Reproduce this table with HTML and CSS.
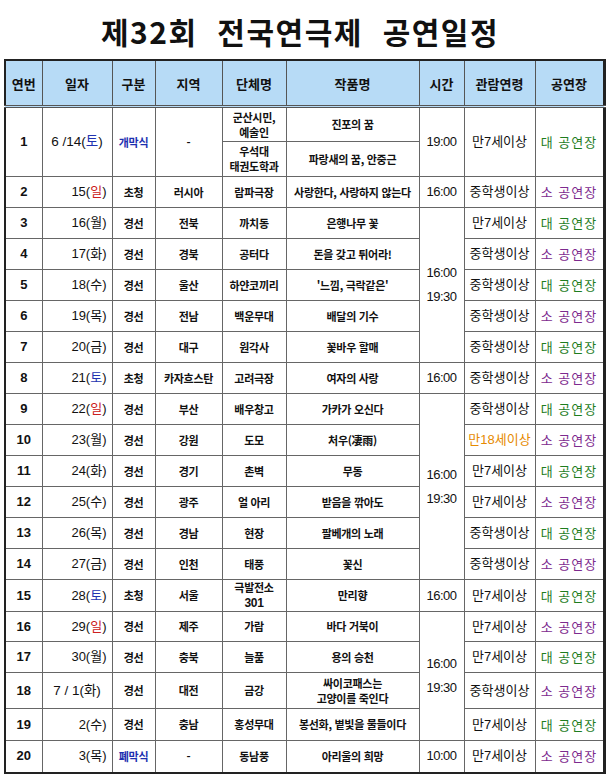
FILE: index.html
```html
<!DOCTYPE html>
<html lang="ko">
<head>
<meta charset="utf-8">
<link rel="stylesheet" href="styles.css">
</head>
<body>
<div class="page">
<h1 class="title">제32회&nbsp; 전국연극제&nbsp; 공연일정</h1>
<table class="sched">
<colgroup>
<col class="c-no"><col class="c-date"><col class="c-type"><col class="c-reg"><col class="c-grp"><col class="c-work"><col class="c-time"><col class="c-age"><col class="c-hall">
</colgroup>
<thead>
<tr><th>연번</th><th>일자</th><th>구분</th><th>지역</th><th>단체명</th><th>작품명</th><th>시간</th><th>관람연령</th><th>공연장</th></tr>
</thead>
<tbody>
<tr class="h35"><td rowspan="2" class="no">1</td><td rowspan="2" class="date spread">6 /14(<span class="sat">토</span>)</td><td rowspan="2" class="k cer">개막식</td><td rowspan="2" class="k">-</td><td class="k">군산시민,<br>예술인</td><td class="k">진포의 꿈</td><td rowspan="2" class="time">19:00</td><td rowspan="2" class="age">만7세이상</td><td rowspan="2" class="hall big">대 공연장</td></tr>
<tr class="h35"><td class="k">우석대<br>태권도학과</td><td class="k">파랑새의 꿈, 안중근</td></tr>
<tr class="h31"><td class="no">2</td><td class="date">15(<span class="sun">일</span>)</td><td class="k">초청</td><td class="k">러시아</td><td class="k">람파극장</td><td class="k">사랑한다, 사랑하지 않는다</td><td class="time">16:00</td><td class="age">중학생이상</td><td class="hall small">소 공연장</td></tr>
<tr class="h31"><td class="no">3</td><td class="date">16(월)</td><td class="k">경선</td><td class="k">전북</td><td class="k">까치동</td><td class="k">은행나무 꽃</td><td rowspan="5" class="time">16:00<br>19:30</td><td class="age">만7세이상</td><td class="hall big">대 공연장</td></tr>
<tr class="h31"><td class="no">4</td><td class="date">17(화)</td><td class="k">경선</td><td class="k">경북</td><td class="k">공터다</td><td class="k">돈을 갖고 튀어라!</td><td class="age">중학생이상</td><td class="hall small">소 공연장</td></tr>
<tr class="h31"><td class="no">5</td><td class="date">18(수)</td><td class="k">경선</td><td class="k">울산</td><td class="k">하얀코끼리</td><td class="k">'느낌, 극락같은'</td><td class="age">중학생이상</td><td class="hall big">대 공연장</td></tr>
<tr class="h31"><td class="no">6</td><td class="date">19(목)</td><td class="k">경선</td><td class="k">전남</td><td class="k">백운무대</td><td class="k">배달의 기수</td><td class="age">중학생이상</td><td class="hall small">소 공연장</td></tr>
<tr class="h31"><td class="no">7</td><td class="date">20(금)</td><td class="k">경선</td><td class="k">대구</td><td class="k">원각사</td><td class="k">꽃바우 할매</td><td class="age">중학생이상</td><td class="hall big">대 공연장</td></tr>
<tr class="h31"><td class="no">8</td><td class="date">21(<span class="sat">토</span>)</td><td class="k">초청</td><td class="k">카자흐스탄</td><td class="k">고려극장</td><td class="k">여자의 사랑</td><td class="time">16:00</td><td class="age">중학생이상</td><td class="hall small">소 공연장</td></tr>
<tr class="h31"><td class="no">9</td><td class="date">22(<span class="sun">일</span>)</td><td class="k">경선</td><td class="k">부산</td><td class="k">배우창고</td><td class="k">가카가 오신다</td><td rowspan="6" class="time">16:00<br>19:30</td><td class="age">중학생이상</td><td class="hall big">대 공연장</td></tr>
<tr class="h31"><td class="no">10</td><td class="date">23(월)</td><td class="k">경선</td><td class="k">강원</td><td class="k">도모</td><td class="k">처우(凄雨)</td><td class="age adult">만18세이상</td><td class="hall small">소 공연장</td></tr>
<tr class="h31"><td class="no">11</td><td class="date">24(화)</td><td class="k">경선</td><td class="k">경기</td><td class="k">촌벽</td><td class="k">무동</td><td class="age">만7세이상</td><td class="hall big">대 공연장</td></tr>
<tr class="h31"><td class="no">12</td><td class="date">25(수)</td><td class="k">경선</td><td class="k">광주</td><td class="k">얼 아리</td><td class="k">받음을 깎아도</td><td class="age">만7세이상</td><td class="hall small">소 공연장</td></tr>
<tr class="h31"><td class="no">13</td><td class="date">26(목)</td><td class="k">경선</td><td class="k">경남</td><td class="k">현장</td><td class="k">팔베개의 노래</td><td class="age">중학생이상</td><td class="hall big">대 공연장</td></tr>
<tr class="h31"><td class="no">14</td><td class="date">27(금)</td><td class="k">경선</td><td class="k">인천</td><td class="k">태풍</td><td class="k">꽃신</td><td class="age">중학생이상</td><td class="hall small">소 공연장</td></tr>
<tr class="h32"><td class="no">15</td><td class="date">28(<span class="sat">토</span>)</td><td class="k">초청</td><td class="k">서울</td><td class="k tight">극발전소<br><span class="num">301</span></td><td class="k">만리향</td><td class="time">16:00</td><td class="age">만7세이상</td><td class="hall big">대 공연장</td></tr>
<tr class="h30"><td class="no">16</td><td class="date">29(<span class="sun">일</span>)</td><td class="k">경선</td><td class="k">제주</td><td class="k">가람</td><td class="k">바다 거북이</td><td rowspan="4" class="time">16:00<br>19:30</td><td class="age">만7세이상</td><td class="hall small">소 공연장</td></tr>
<tr class="h31"><td class="no">17</td><td class="date">30(월)</td><td class="k">경선</td><td class="k">충북</td><td class="k">늘품</td><td class="k">용의 승천</td><td class="age">만7세이상</td><td class="hall big">대 공연장</td></tr>
<tr class="h36"><td class="no">18</td><td class="date spread">7 / 1(화)</td><td class="k">경선</td><td class="k">대전</td><td class="k">금강</td><td class="k">싸이코패스는<br>고양이를 죽인다</td><td class="age">중학생이상</td><td class="hall small">소 공연장</td></tr>
<tr class="h32"><td class="no">19</td><td class="date">2(수)</td><td class="k">경선</td><td class="k">충남</td><td class="k">홍성무대</td><td class="k">봉선화, 볕빛을 물들이다</td><td class="age">만7세이상</td><td class="hall big">대 공연장</td></tr>
<tr class="h32"><td class="no">20</td><td class="date">3(목)</td><td class="k cer">폐막식</td><td class="k">-</td><td class="k">동남풍</td><td class="k">아리울의 희망</td><td class="time">10:00</td><td class="age">만7세이상</td><td class="hall small">소 공연장</td></tr>
</tbody>
</table>
</div>
</body>
</html>
```
FILE: styles.css
```css
html, body {
  margin: 0;
  padding: 0;
  background: #ffffff;
}
.page {
  width: 610px;
  height: 777px;
  padding: 0 0 0 4px;
  box-sizing: border-box;
  font-family: "Liberation Sans", "Noto Sans CJK KR", sans-serif;
  color: #111;
}
.title {
  margin: 0;
  height: 59px;
  line-height: 62px;
  padding-right: 14px;
  text-align: center;
  font-family: "Noto Sans CJK KR", sans-serif;
  font-size: 30px;
  font-weight: 700;
  letter-spacing: 1.5px;
  color: #111;
}
.sched {
  border-collapse: collapse;
  table-layout: fixed;
  width: 599px;
  border: 2px solid #222;
  border-right-width: 3px;
}
.c-no { width: 37px; }
.c-date { width: 70px; }
.c-type { width: 43px; }
.c-reg { width: 67px; }
.c-grp { width: 64px; }
.c-work { width: 133px; }
.c-time { width: 45px; }
.c-age { width: 71px; }
.c-hall { width: 69px; }
.sched th {
  height: 44px;
  background: #b7dbf6;
  border: 1px solid #555;
  border-bottom: 3px double #555;
  font-family: "Noto Sans CJK KR", sans-serif;
  font-size: 13px;
  font-weight: 700;
  padding: 0;
  color: #111;
}
.sched td {
  border: 1px solid #666;
  padding: 0;
  text-align: center;
  vertical-align: middle;
  font-size: 13px;
  line-height: 16px;
  white-space: nowrap;
  overflow: hidden;
}
.h35 { height: 35px; }
.h36 { height: 36px; }
.h32 { height: 32px; }
.h31 { height: 31px; }
.h30 { height: 30px; }
.no { font-size: 13px; font-weight: 700; }
.date {
  text-align: right !important;
  padding-right: 5px !important;
  font-size: 13px;
}
.date.spread {
  text-align: center !important;
  padding-right: 0 !important;
  font-size: 13.5px;
}
.k {
  font-family: "Noto Sans CJK KR", sans-serif;
  font-size: 11px !important;
  font-weight: 700;
  letter-spacing: -0.3px;
  line-height: 15px !important;
}
.num { font-family: "Liberation Sans", sans-serif; font-size: 12px; }
.cer { color: #1c2fb0; }
.sat { color: #2233b0; }
.sun { color: #cc2020; }
.time { font-size: 13px; line-height: 24px !important; letter-spacing: -0.5px; }
.age {
  font-family: "Liberation Sans", "Noto Sans CJK KR", sans-serif;
  font-size: 13px;
}
.adult { color: #e68a00; }
.hall {
  font-family: "Noto Sans CJK KR", sans-serif;
  font-size: 13px;
  letter-spacing: 1px;
}
.big { color: #1e7d1e; }
.small { color: #7d2a8e; }
```
